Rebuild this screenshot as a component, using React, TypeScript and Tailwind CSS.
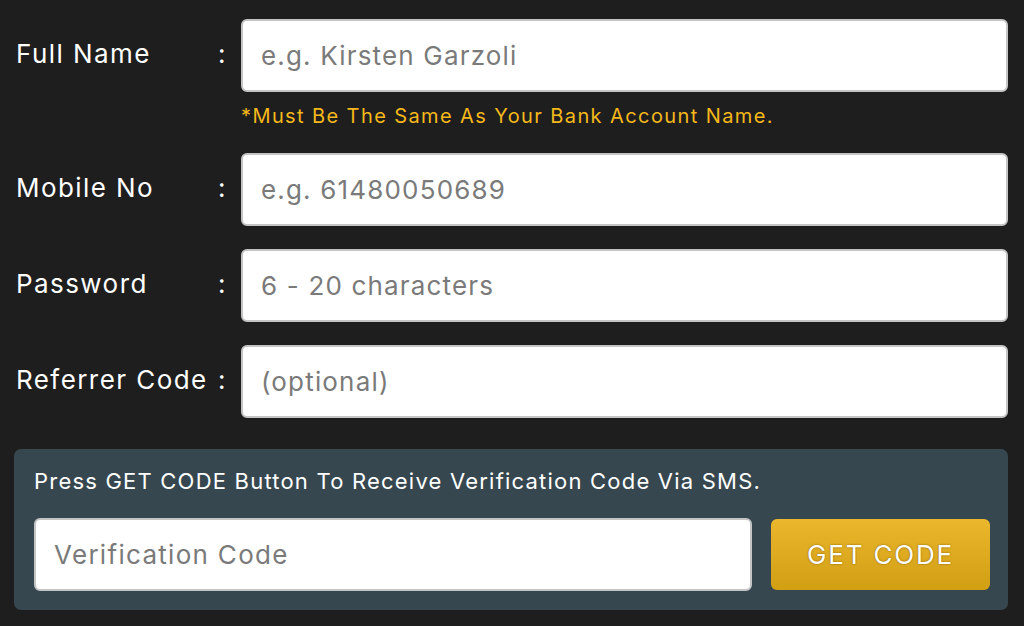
import React from "react";

const font = { fontFamily: "Inter, 'Open Sans', sans-serif" };

interface FieldRowProps {
  label: string;
  placeholder: string;
  type?: string;
}

const FieldRow: React.FC<FieldRowProps> = ({ label, placeholder, type = "text" }) => {
  return (
    <div className="flex items-center pl-4 pr-4">
      <div className="w-[202px] text-[26px] tracking-[0.055em] text-white -mt-[5px]">{label}</div>
      <div className="w-[8px] text-[26px] text-white -mt-[5px]">:</div>
      <input
        type={type}
        placeholder={placeholder}
        className="ml-[15px] h-[73px] flex-1 rounded-[6px] border-2 border-[#c4c4c4] bg-white px-[18px] text-[26px] tracking-[0.045em] text-[#333] placeholder:text-[#7a7a7a] outline-none"
      />
    </div>
  );
};

export default function App() {
  return (
    <div className="w-[1024px] h-[626px] overflow-hidden bg-[#1e1e1e] pt-[19px]" style={font}>
      <FieldRow label="Full Name" placeholder="e.g. Kirsten Garzoli" />
      <div className="pl-[241px] pt-[10px] pb-[23px] text-[20px] leading-[28px] tracking-[0.07em] text-[#f5b81c]">
        *Must Be The Same As Your Bank Account Name.
      </div>

      <div className="flex flex-col gap-[23px]">
        <FieldRow label="Mobile No" placeholder="e.g. 61480050689" type="tel" />
        <FieldRow label="Password" placeholder="6 - 20 characters" type="password" />
        <FieldRow label="Referrer Code" placeholder="(optional)" />
      </div>

      <div className="mx-[14px] mt-[31px] w-[994px] rounded-[7px] bg-[#37474f] pl-[20px] pr-[18px] pt-[16px] pb-[19px]">
        <p className="text-[22px] leading-[32px] tracking-[0.055em] text-white">
          Press GET CODE Button To Receive Verification Code Via SMS.
        </p>
        <div className="mt-[21px] flex items-center gap-[19px]">
          <input
            type="text"
            placeholder="Verification Code"
            className="h-[73px] flex-1 rounded-[6px] border-2 border-[#c4c4c4] bg-white px-[18px] text-[26px] tracking-[0.05em] text-[#333] placeholder:text-[#7a7a7a] outline-none"
          />
          <button className="h-[71px] w-[219px] rounded-[6px] bg-gradient-to-b from-[#ebb72c] to-[#d19f12] text-[26px] tracking-[0.07em] text-white [text-shadow:0_0_2px_rgba(120,80,0,0.9)]">
            GET CODE
          </button>
        </div>
      </div>
    </div>
  );
}
